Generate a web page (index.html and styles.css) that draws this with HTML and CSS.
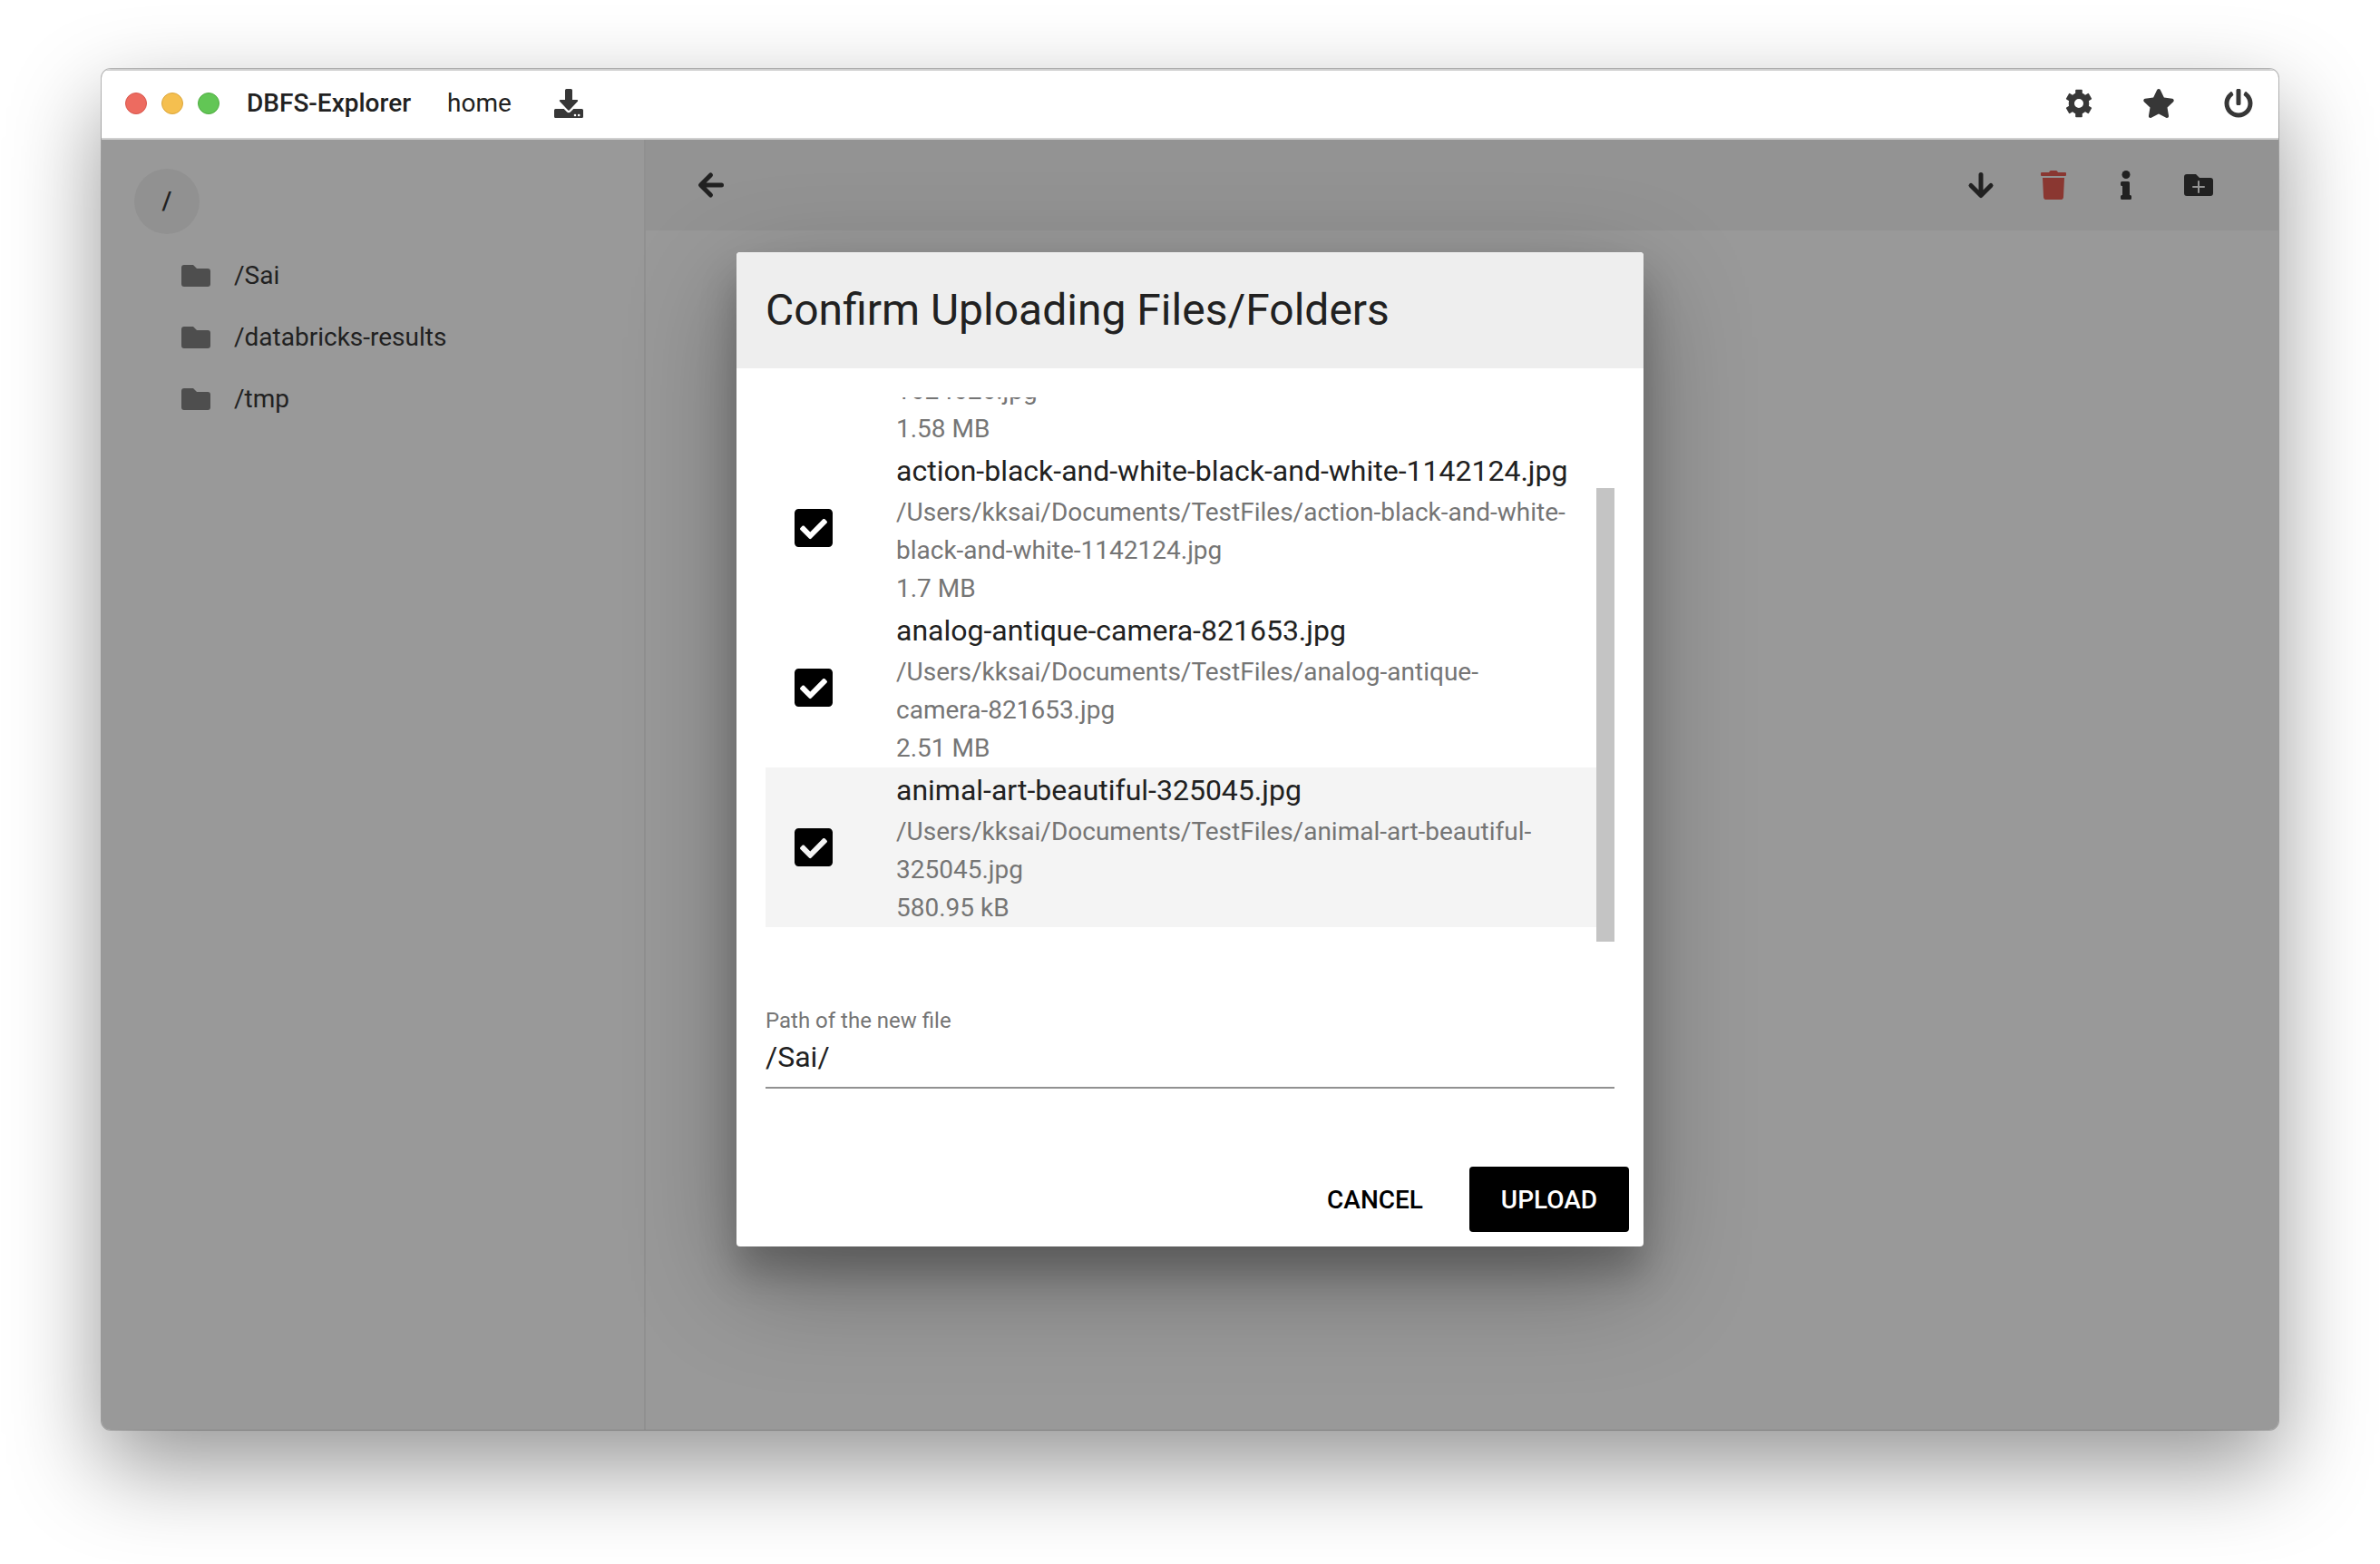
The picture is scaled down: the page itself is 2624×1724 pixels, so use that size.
FILE: index.html
```html
<!DOCTYPE html>
<html lang="en">
<head>
<meta charset="utf-8">
<title>DBFS-Explorer</title>
<link rel="stylesheet" href="styles.css">
</head>
<body>
<div class="window">
  <header class="titlebar">
    <div class="lights">
      <button class="light light-close" aria-label="Close"></button>
      <button class="light light-min" aria-label="Minimise"></button>
      <button class="light light-max" aria-label="Zoom"></button>
    </div>
    <h1 class="app-name">DBFS-Explorer</h1>
    <a class="home" href="#">home</a>
    <button class="icon-button" aria-label="Downloads">
      <svg class="icon" viewBox="0 0 32 32"><path d="M13.500 0h5a1.500 1.500 0 0 1 1.500 1.500V12h5.200a1 1 0 0 1 .7 1.700l-9.200 9.700a1 1 0 0 1-1.400 0L6.100 13.700a1 1 0 0 1 .7-1.700H12V1.500A1.500 1.500 0 0 1 13.500 0z"/><path fill-rule="evenodd" d="M1.500 22h9.200l3.200 3.200a3 3 0 0 0 4.200 0l3.200-3.200h9.200a1.500 1.500 0 0 1 1.500 1.500v7a1.500 1.500 0 0 1-1.500 1.500h-29A1.500 1.500 0 0 1 0 30.500v-7A1.500 1.500 0 0 1 1.500 22zM23 27.700a1.300 1.300 0 1 0 0 2.600a1.300 1.300 0 0 0 0-2.600zM27.200 27.700a1.300 1.300 0 1 0 0 2.600a1.300 1.300 0 0 0 0-2.600z"/></svg>
    </button>
    <nav class="title-actions">
      <button class="icon-button" aria-label="Settings">
        <svg class="icon" viewBox="0 0 32 32"><path fill-rule="evenodd" d="M12.200 1.500Q12.200.7 13 .7h6q.8 0 .8.800v3.300a12 12 0 0 1 3.200 1.900l2.900-1.700q.7-.4 1.100.3l3 5.200q.4.700-.3 1.100L26.900 13.200a12 12 0 0 1 0 5.600l2.800 1.600q.7.400.3 1.100l-3 5.200q-.4.700-1.100.3L23 25.300a12 12 0 0 1-3.200 1.900v3.300q0 .8-.8.800h-6q-.8 0-.8-.8v-3.300A12 12 0 0 1 9 25.300l-2.900 1.700q-.7.400-1.100-.3l-3-5.200q-.4-.7.300-1.100l2.800-1.600a12 12 0 0 1 0-5.600L2.300 11.600q-.7-.4-.3-1.100l3-5.200q.4-.7 1.100-.3L9 6.700a12 12 0 0 1 3.200-1.900zM16 11a5 5 0 1 0 0 10a5 5 0 0 0 0-10z"/></svg>
      </button>
      <button class="icon-button" aria-label="Favourites">
        <svg class="icon icon-wide" viewBox="20 0 536 512"><path d="M259.300 17.800L194 150.200 47.900 171.500c-26.200 3.800-36.700 36.100-17.700 54.600l105.700 103-25 145.500c-4.500 26.300 23.200 46 46.400 33.700L288 439.600l130.700 68.700c23.200 12.200 50.900-7.400 46.400-33.700l-25-145.500 105.700-103c19-18.500 8.500-50.800-17.700-54.600L382 150.200 316.700 17.800c-11.700-23.600-45.600-23.900-57.400 0z"/></svg>
      </button>
      <button class="icon-button" aria-label="Sign out">
        <svg class="icon" viewBox="0 0 512 512"><path d="M400 54.100c63 45 104 118.600 104 201.900 0 136.800-110.800 247.700-247.500 248C120 504.300 8.200 393 8 256.400 7.900 173.100 48.900 99.300 111.800 54.200c11.700-8.300 28-4.800 35 7.700L162.600 90c5.900 10.500 3.100 23.800-6.600 31-41.500 30.800-68 79.600-68 134.900-.1 92.300 74.500 168.100 168 168.100 91.600 0 168.600-74.200 168-169.100-.3-51.800-24.700-101.800-68.100-134-9.700-7.200-12.400-20.500-6.500-30.900l15.800-28.100c7-12.400 23.200-16.100 34.800-7.800zM296 264V24c0-13.300-10.700-24-24-24h-32c-13.300 0-24 10.700-24 24v240c0 13.300 10.700 24 24 24h32c13.300 0 24-10.700 24-24z"/></svg>
      </button>
    </nav>
  </header>

  <div class="workspace">
    <aside class="sidebar">
      <button class="root">/</button>
      <ul class="tree">
        <li><a class="folder" href="#"><svg class="folder-icon" viewBox="0 0 32 24"><path d="M3 0h10l4 4h12a3 3 0 0 1 3 3v14a3 3 0 0 1-3 3H3a3 3 0 0 1-3-3V3a3 3 0 0 1 3-3z"/></svg>/Sai</a></li>
        <li><a class="folder" href="#"><svg class="folder-icon" viewBox="0 0 32 24"><path d="M3 0h10l4 4h12a3 3 0 0 1 3 3v14a3 3 0 0 1-3 3H3a3 3 0 0 1-3-3V3a3 3 0 0 1 3-3z"/></svg>/databricks-results</a></li>
        <li><a class="folder" href="#"><svg class="folder-icon" viewBox="0 0 32 24"><path d="M3 0h10l4 4h12a3 3 0 0 1 3 3v14a3 3 0 0 1-3 3H3a3 3 0 0 1-3-3V3a3 3 0 0 1 3-3z"/></svg>/tmp</a></li>
      </ul>
    </aside>
    <main class="content">
      <div class="toolbar">
        <button class="icon-button" aria-label="Back">
          <svg class="icon stroke" viewBox="0 0 32 32"><path d="M27.500 16H5M15.500 5L4.500 16l11 11"/></svg>
        </button>
        <div class="tools">
          <button class="icon-button" aria-label="Download">
            <svg class="icon stroke" viewBox="0 0 32 32"><path d="M16 4.500V27M5 16.500L16 27.500l11-11"/></svg>
          </button>
          <button class="icon-button danger" aria-label="Delete">
            <svg class="icon" viewBox="0 0 32 32"><path d="M3 2h8l1-1.500q.4-.5 1-.5h6q.6 0 1 .5L21 2h8q1 0 1 1v2q0 1-1 1H3q-1 0-1-1V3q0-1 1-1zM4 8h24l-1 21.200q-.2 2.800-3 2.800H8q-2.800 0-3-2.800z"/></svg>
          </button>
          <button class="icon-button" aria-label="Info">
            <svg class="icon" viewBox="0 0 32 32"><circle cx="16" cy="4.500" r="4.500"/><path d="M11.500 12h7A1.500 1.500 0 0 1 20 13.500V27h.5a1.500 1.500 0 0 1 1.500 1.500v2a1.500 1.500 0 0 1-1.500 1.500h-9a1.500 1.500 0 0 1-1.500-1.500v-2a1.500 1.500 0 0 1 1.500-1.500h.5V17h-.5a1.500 1.500 0 0 1-1.500-1.500v-2a1.500 1.500 0 0 1 1.500-1.500z"/></svg>
          </button>
          <button class="icon-button" aria-label="New folder">
            <svg class="icon" viewBox="0 0 32 32"><path fill-rule="evenodd" d="M3 4h10l4 4h12a3 3 0 0 1 3 3v14a3 3 0 0 1-3 3H3a3 3 0 0 1-3-3V7a3 3 0 0 1 3-3zM15 12v5h-5a1 1 0 0 0 0 2h5v5a1 1 0 0 0 2 0v-5h5a1 1 0 0 0 0-2h-5v-5a1 1 0 0 0-2 0z"/></svg>
          </button>
        </div>
      </div>
    </main>

    <div class="overlay">
      <form class="dialog" role="dialog" aria-labelledby="dialog-title">
        <h2 class="dialog-title" id="dialog-title">Confirm Uploading Files/Folders</h2>
        <div class="dialog-body">
          <div class="list-area">
            <div class="scroller">
              <ul class="files">
                <li class="file">
                  <input class="check" type="checkbox" id="f0" checked>
                  <label class="file-text" for="f0"><span class="file-name">adult-beautiful-camera-1624626.jpg</span><span class="file-path">/Users/kksai/Documents/TestFiles/adult-beautiful-camera-1624626.jpg</span><span class="file-size">1.58 MB</span></label>
                </li>
                <li class="file">
                  <input class="check" type="checkbox" id="f1" checked>
                  <label class="file-text" for="f1"><span class="file-name">action-black-and-white-black-and-white-1142124.jpg</span><span class="file-path">/Users/kksai/Documents/TestFiles/action-black-and-white-black-and-white-1142124.jpg</span><span class="file-size">1.7 MB</span></label>
                </li>
                <li class="file">
                  <input class="check" type="checkbox" id="f2" checked>
                  <label class="file-text" for="f2"><span class="file-name">analog-antique-camera-821653.jpg</span><span class="file-path">/Users/kksai/Documents/TestFiles/analog-antique-camera-821653.jpg</span><span class="file-size">2.51 MB</span></label>
                </li>
                <li class="file file-active">
                  <input class="check" type="checkbox" id="f3" checked>
                  <label class="file-text" for="f3"><span class="file-name">animal-art-beautiful-325045.jpg</span><span class="file-path">/Users/kksai/Documents/TestFiles/animal-art-beautiful-325045.jpg</span><span class="file-size">580.95 kB</span></label>
                </li>
              </ul>
            </div>
            <div class="scrollbar"><div class="thumb"></div></div>
          </div>
          <div class="field">
            <label class="field-label" for="path">Path of the new file</label>
            <input class="field-input" type="text" id="path" value="/Sai/">
          </div>
        </div>
        <div class="dialog-actions">
          <button class="button" type="button">CANCEL</button>
          <button class="button button-primary" type="submit">UPLOAD</button>
        </div>
      </form>
    </div>
  </div>
</div>
</body>
</html>
```
FILE: styles.css
```css
* {
  box-sizing: border-box;
}

body {
  margin: 0;
  min-height: 100vh;
  padding: 76px 112px 148px;
  display: flex;
  background: #fff;
  color: #212121;
  font-family: Roboto, "Liberation Sans", sans-serif;
  font-size: 28px;
  line-height: 42px;
}

h1, h2, ul {
  margin: 0;
  padding: 0;
}

ul {
  list-style: none;
}

button {
  border: 0;
  padding: 0;
  background: none;
  color: inherit;
  font: inherit;
}

a {
  color: inherit;
  text-decoration: none;
}

.window {
  flex: 1;
  display: flex;
  flex-direction: column;
  border-radius: 10px;
  overflow: hidden;
  background: #fff;
  box-shadow: 0 0 0 1px rgba(0, 0, 0, 0.25), 0 40px 100px rgba(0, 0, 0, 0.42);
}

.titlebar {
  display: flex;
  align-items: center;
  height: 78px;
  padding: 0 28px 2px 26px;
  border-top: 2px solid #d0d0d0;
  border-bottom: 2px solid #d0d0d0;
}

.lights {
  display: flex;
  gap: 16px;
}

.light {
  width: 24px;
  height: 24px;
  border-radius: 50%;
  border: 1px solid;
}

.light-close {
  background: #ed6b60;
  border-color: #d8574d;
}

.light-min {
  background: #f5bf4f;
  border-color: #dba63c;
}

.light-max {
  background: #62c655;
  border-color: #50ac42;
}

.app-name {
  margin-left: 30px;
  font-size: 28px;
  font-weight: 500;
}

.home {
  margin: 0 47px 0 40px;
}

.icon-button {
  display: block;
  color: #373737;
}

.icon {
  display: block;
  width: 32px;
  height: 32px;
  fill: currentColor;
}

.icon-wide {
  width: 34px;
}

.stroke {
  fill: none;
  stroke: currentColor;
  stroke-width: 5;
  stroke-linecap: round;
  stroke-linejoin: round;
}

.title-actions {
  display: flex;
  gap: 55px;
  margin-left: auto;
}

.workspace {
  position: relative;
  flex: 1;
  display: flex;
  color: #373737;
}

.sidebar {
  flex: 0 0 25%;
  padding: 32px 36px;
  border-right: 2px solid #f0f0f0;
}

.root {
  width: 72px;
  height: 72px;
  border-radius: 50%;
  background: #f2f2f2;
  font-weight: 500;
}

.tree {
  padding: 12px 0 0 52px;
}

.folder {
  display: flex;
  align-items: center;
  gap: 26px;
  height: 68px;
}

.folder-icon {
  width: 32px;
  height: 24px;
  fill: #828282;
}

.content {
  flex: 1;
}

.toolbar {
  display: flex;
  align-items: center;
  justify-content: space-between;
  height: 100px;
  padding: 0 72px 0 56px;
  background: #f6f6f6;
}

.tools {
  display: flex;
  gap: 48px;
}

.danger {
  color: #e65c53;
}

.overlay {
  position: absolute;
  inset: 0;
  display: flex;
  align-items: flex-start;
  justify-content: center;
  padding-top: 124px;
  background: rgba(0, 0, 0, 0.4);
}

.dialog {
  width: 1000px;
  border-radius: 4px;
  overflow: hidden;
  background: #fff;
  color: #212121;
  box-shadow: 0 38px 120px rgba(0, 0, 0, 0.3), 0 30px 40px rgba(0, 0, 0, 0.22);
}

.dialog-title {
  padding: 32px;
  background: #eee;
  font-size: 48px;
  font-weight: 400;
  line-height: 64px;
}

.dialog-body {
  padding: 32px 32px 70px;
}

.list-area {
  display: flex;
  height: 600px;
}

/* Reversed column: the list opens scrolled to its newest entry. */
.scroller {
  flex: 1;
  display: flex;
  flex-direction: column-reverse;
  overflow-y: auto;
  scrollbar-width: none;
}

.scrollbar {
  display: flex;
  flex: 0 0 20px;
  align-items: flex-end;
}

.thumb {
  width: 100%;
  height: 500px;
  background: #c4c4c4;
}

.files {
  padding-bottom: 16px;
}

.file {
  display: flex;
  align-items: center;
  gap: 70px;
  padding: 0 32px;
}

.file-active {
  background: #f4f4f4;
}

.check {
  appearance: none;
  flex: none;
  width: 42px;
  height: 42px;
  margin: 0;
}

.check:checked {
  background: url("data:image/svg+xml,%3Csvg xmlns='http://www.w3.org/2000/svg' viewBox='0 32 448 448'%3E%3Cpath d='M400 480H48c-26.510 0-48-21.490-48-48V80c0-26.510 21.490-48 48-48h352c26.510 0 48 21.490 48 48v352c0 26.510-21.490 48-48 48zm-204.686-98.059l184-184c6.248-6.248 6.248-16.379 0-22.627l-22.627-22.627c-6.248-6.248-16.379-6.249-22.628 0L184 302.745l-70.059-70.059c-6.248-6.248-16.379-6.248-22.628 0l-22.627 22.627c-6.248 6.248-6.248 16.379 0 22.627l104 104c6.249 6.250 16.379 6.250 22.628.001z'/%3E%3C/svg%3E") center / contain no-repeat;
}

.file-text {
  flex: 1;
  min-width: 0;
  color: #757575;
}

.file-text span {
  display: block;
}

.file-text .file-name {
  color: #212121;
  font-size: 32px;
  line-height: 50px;
  white-space: nowrap;
}

.field {
  padding-top: 64px;
}

.field-label {
  display: block;
  color: #757575;
  font-size: 24px;
  line-height: 46px;
}

.field-input {
  display: block;
  width: 100%;
  height: 52px;
  padding: 0 0 16px;
  border: 0;
  border-bottom: 2px solid #919191;
  background: none;
  color: #212121;
  font: inherit;
  font-size: 32px;
  outline: 0;
}

.dialog-actions {
  display: flex;
  justify-content: flex-end;
  gap: 16px;
  padding: 16px;
}

.button {
  min-width: 176px;
  height: 72px;
  padding-top: 2px;
  border-radius: 4px;
  color: #000;
  font-weight: 500;
}

.button-primary {
  background: #000;
  color: #fff;
}
```
